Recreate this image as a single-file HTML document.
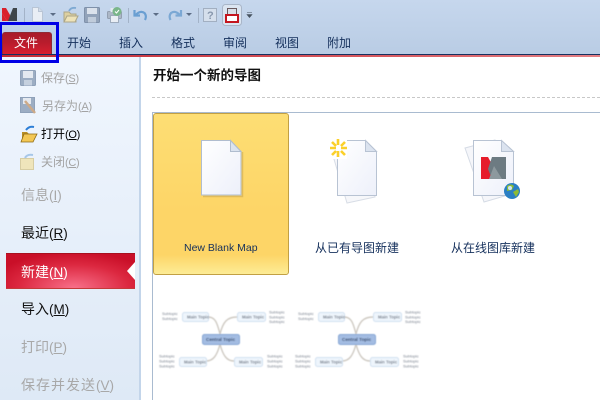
<!DOCTYPE html>
<html lang="zh"><head><meta charset="utf-8"><style>
*{box-sizing:border-box}
html,body{margin:0;padding:0;width:600px;height:400px;overflow:hidden;background:#fff}
body{position:relative;font-family:"Liberation Sans","WenQuanYi Zen Hei","Noto Sans CJK SC",sans-serif}
.a{position:absolute;white-space:nowrap}
.tab{position:absolute;top:31px;font-size:12px;line-height:24px;height:24px;color:#15305c}
.s{position:absolute;white-space:nowrap;font-size:12px;line-height:18px;color:#a3a3a3}
.b{position:absolute;left:21px;white-space:nowrap;font-size:14px;line-height:20px;color:#a8a8a8}
.s i{font-style:normal;font-size:11px;letter-spacing:-.3px}
.b i{font-style:normal;font-size:13.500px;letter-spacing:0}
u{text-underline-offset:1px}
.lbl{position:absolute;font-size:12px;line-height:16px;color:#15305c;white-space:nowrap}
</style></head><body>
<div class="a" style="left:0;top:0;width:600px;height:54px;background:linear-gradient(#c6d7ed,#b9cce4)"></div>
<div class="a" style="left:0;top:54px;width:600px;height:1px;background:#16305f"></div>
<div class="a" style="left:0;top:55px;width:600px;height:2px;background:linear-gradient(90deg,#c22a35,#d8565c 60%,#e47f84)"></div>

<svg class="a" style="left:0;top:0" width="260" height="30" viewBox="0 0 260 30">
<path d="M2 8h4l4 7v6H7l-5-8z" fill="#d9202c"/><path d="M2 13l5 8H2z" fill="#d9202c"/><path d="M8 21l3-8 2-5h4v13z" fill="#3f464b"/>
<path d="M24.500 8v15" stroke="#a3b3c8"/>
<path d="M32.500 7.500h6l4 4v10h-10z" fill="#e9eef5" stroke="#b9c5d5"/><path d="M38.500 7.500v4h4" fill="#d3dce8" stroke="#b9c5d5"/>
<path d="M50 13h6l-3 3z" fill="#5c6d85"/>
<path d="M64 12h5l2 2h5v8H64z" fill="#ddd0a0" stroke="#aca688"/><path d="M64 22l3-6h11l-3 6z" fill="#eee3b8" stroke="#aca688"/><path d="M69 11q2-4 7-3" fill="none" stroke="#7ea9d2" stroke-width="1.800"/>
<rect x="84.500" y="7.500" width="15" height="15" rx="1" fill="#92a3ba" stroke="#7f91aa"/><rect x="87" y="8" width="10" height="6" fill="#dbe2ec"/><rect x="88" y="17" width="8" height="5.500" fill="#c0ccdb"/>
<rect x="107.500" y="11.500" width="14" height="7" rx="1" fill="#acb7c6" stroke="#939fb0"/><rect x="110.500" y="15.500" width="8" height="7" fill="#e9eef4" stroke="#9dabbd"/><rect x="110.500" y="8" width="7" height="4" fill="#e4e9f0"/><circle cx="117" cy="11.500" r="4.500" fill="#7ab68a"/><path d="M115 11.500l1.500 1.500 2.500-3" stroke="#fff" fill="none"/>
<path d="M128.500 8v15" stroke="#a3b3c8"/>
<path d="M134.500 10v5.500h5.500M135.500 15q5-5 9-2 2.500 3 .5 7" fill="none" stroke="#6a9fd2" stroke-width="2.200"/>
<path d="M153 13h6l-3 3z" fill="#5c6d85"/>
<path d="M181 10v5.500h-5.500M180 15q-5-5-9-2-2.500 3-.5 7" fill="none" stroke="#7ba8d4" stroke-width="2.200"/>
<path d="M186 13h6l-3 3z" fill="#5c6d85"/>
<path d="M198.500 8v15" stroke="#a3b3c8"/>
<rect x="203.500" y="8.500" width="13" height="13" fill="#d5dfec" stroke="#a2afc1"/><text x="207" y="19" font-size="11" font-weight="bold" fill="#8797ad" font-family="Liberation Sans">?</text>
<rect x="222.500" y="4.500" width="19" height="21" rx="3" fill="#dbe5f1" stroke="#a9b6c8"/><rect x="227.500" y="8.500" width="9" height="6" fill="#d9dfe8" stroke="#6a5a5e"/><rect x="226" y="15" width="12" height="7" fill="#fff" stroke="#c4161f" stroke-width="2"/>
<path d="M247 12.500h5M247 14.500h5l-2.500 3z" fill="#46525f" stroke="#46525f" stroke-width=".600"/>
</svg>

<div class="a" style="left:2px;top:32px;width:50px;height:22px;border-radius:3px 3px 0 0;background:linear-gradient(#a91b2a,#b81c2c 45%,#d71f30);border:1px solid #8f2a35;border-bottom:0"></div>
<div class="a" style="left:14px;top:34px;color:#fff;font-size:12px;line-height:18px">文件</div>
<div class="tab" style="left:67px">开始</div>
<div class="tab" style="left:119px">插入</div>
<div class="tab" style="left:171px">格式</div>
<div class="tab" style="left:223px">审阅</div>
<div class="tab" style="left:275px">视图</div>
<div class="tab" style="left:327px">附加</div>

<div class="a" style="left:0;top:57px;width:141px;height:343px;background:linear-gradient(#f0f6fe,#dee9f6);border-right:2px solid #c3d5ea"></div>
<div class="a" style="left:0;top:22px;width:59px;height:41px;border:3px solid #0000e6;border-left-width:2px"></div>

<svg class="a" style="left:18px;top:68px" width="20" height="104" viewBox="0 0 20 104">
<rect x="2.500" y="2.500" width="15" height="15" rx="1" fill="#9cadc3" stroke="#8fa1b9"/><rect x="5" y="3" width="10" height="7" fill="#e4e9f0"/><rect x="6" y="12" width="8" height="5.500" fill="#c5d0de"/>
<rect x="2.500" y="29.500" width="14" height="15" fill="#9cadc3" stroke="#8fa1b9"/><rect x="5" y="30" width="8" height="6" fill="#e4e9f0"/><path d="M7 33l10 12" stroke="#cdaa88" stroke-width="2.500"/>
<path d="M4 72v-8h5l2 2h5v6z" fill="#b98f27"/><path d="M3 74l3-8h13l-4 8z" fill="#f3c754" stroke="#8d6a14" stroke-width=".800"/><path d="M8 62q3-4 8-3" fill="none" stroke="#2d7fd6" stroke-width="2"/>
<path d="M2.500 101.500v-11h13v11z" fill="#efe5bb" stroke="#d7cda3"/><path d="M7 90q2-4 8-3" fill="none" stroke="#a7c7e8" stroke-width="2"/>
</svg>
<div class="s" style="left:41px;top:69px">保存<i>(<u>S</u>)</i></div>
<div class="s" style="left:42px;top:97px">另存为<i>(<u>A</u>)</i></div>
<div class="s" style="left:41px;top:125px;color:#000">打开<i>(<u>O</u>)</i></div>
<div class="s" style="left:41px;top:153px">关闭<i>(<u>C</u>)</i></div>
<div class="b" style="top:185px">信息<i>(<u>I</u>)</i></div>
<div class="b" style="top:223px;color:#111">最近<i>(<u>R</u>)</i></div>

<div class="a" style="left:6px;top:253px;width:129px;height:36px;background:radial-gradient(ellipse 85px 36px at 68px 34px,#f8708a,#dc2840 65%,#c90f28);border-top:1px solid #a8101f;border-bottom:1px solid #c43a3a"></div>
<svg class="a" style="left:127px;top:262px" width="8" height="18"><path d="M8 0v18L0 9z" fill="#fff"/></svg>
<div class="b" style="top:262px;color:#fff">新建<i>(<u>N</u>)</i></div>
<div class="b" style="top:299px;color:#111">导入<i>(<u>M</u>)</i></div>
<div class="b" style="top:337px">打印<i>(<u>P</u>)</i></div>
<div class="b" style="top:375px;letter-spacing:1px">保存并发送<i>(<u>V</u>)</i></div>

<div class="a" style="left:153px;top:67px;font-size:13.500px;line-height:18px;font-weight:bold;color:#111">开始一个新的导图</div>
<div class="a" style="left:152px;top:97px;width:448px;border-top:1px dashed #c8c8c8"></div>
<div class="a" style="left:152px;top:112px;width:448px;height:1px;background:#a9bbd0"></div>
<div class="a" style="left:152px;top:112px;width:1px;height:288px;background:#a9bbd0"></div>

<div class="a" style="left:153px;top:113px;width:136px;height:162px;border-radius:3px;border:1px solid #c2a044;background:linear-gradient(#fdde74,#fdd567 60%,#fdd567 88%,#fdec96)"></div>
<svg width="0" height="0" style="position:absolute"><defs><linearGradient id="g" x1="0" y1="0" x2="1" y2="1"><stop offset="0" stop-color="#fff"/><stop offset="1" stop-color="#edf0fa"/></linearGradient></defs></svg>
<svg class="a" style="left:200px;top:138px" width="48" height="62">
<path d="M3 58.500h39.500V14" fill="none" stroke="#c49f4c" stroke-opacity=".500" stroke-width="1.500"/>
<path d="M1.500 2.500h29l10.500 11v43.500H1.500z" fill="url(#g)" stroke="#b0bdcf"/><path d="M30.500 2.500v11H41z" fill="#dbe3ef" stroke="#b0bdcf"/>
</svg>
<div class="a" style="left:184px;top:240px;font-size:10.500px;line-height:16px;color:#15305c">New Blank Map</div>

<svg class="a" style="left:325px;top:133px" width="65" height="72">
<path d="M6 16l36 0 8 48-28 6z" fill="#f6f7fa" stroke="#d8dde6"/><path d="M20 20h30v42H24z" fill="#f1f3f8" stroke="#dce0e8"/>
<path d="M12.500 7.500h28l11 11v44h-39z" fill="url(#g)" stroke="#b8c3d3"/><path d="M40.500 7.500v11h11z" fill="#dbe3ef" stroke="#b8c3d3"/>
<rect x="3" y="4" width="19" height="22" fill="#fff"/>
<g stroke="#fbd02a" stroke-width="2.600"><path d="M13 6v6M13 18v6M5 15h6M16 15h6M7 9l4 4M20 9l-4 4M7 22l4-4M20 22l-4-4"/></g>
</svg>
<div class="lbl" style="left:315px;top:240px">从已有导图新建</div>

<svg class="a" style="left:460px;top:135px" width="65" height="70">
<path d="M5 13l30-8 20 53-31 9z" fill="#f5f6fa" stroke="#d5dbe5"/>
<path d="M13.500 5.500h28l12 11v44h-40z" fill="url(#g)" stroke="#b8c3d3"/><path d="M41.500 5.500v11h12z" fill="#dbe3ef" stroke="#b8c3d3"/>
<path d="M21 22h7l8 15-4 7H21z" fill="#e61c2b"/><path d="M32 22h14v22H32l-4-10z" fill="#6d7b82"/><path d="M29 44l5-13 8 13z" fill="#8d999e"/>
<circle cx="52" cy="56" r="8" fill="#2a7fc4"/><path d="M47 51q4-3 7 0l-2 4-5 1zM53 57l5-3 1 3-3 5z" fill="#8dbb35"/><circle cx="50" cy="53" r="2" fill="#cfe6f6"/>
</svg>
<div class="lbl" style="left:451px;top:240px">从在线图库新建</div>

<svg class="a" style="left:153px;top:300px" width="290" height="80" viewBox="0 0 290 80" font-family="Liberation Sans" font-size="4" fill="#7a828f">
<defs><filter id="f" x="-5%" y="-5%" width="110%" height="110%"><feGaussianBlur stdDeviation=".550"/></filter></defs>
<g filter="url(#f)">
<g id="m">
<path d="M67 34C64 22 62 17 55 17M67 34C70 22 74 17 84 17M67 44C64 56 60 61 53 61M67 44C70 56 74 61 81 61" fill="none" stroke="#cfcac3" stroke-width="1.400"/>
<rect x="49.500" y="34.500" width="37" height="10" rx="2" fill="#a3bce2" stroke="#88a8d5"/>
<text x="53" y="41" font-weight="bold" font-size="4.600" fill="#34486a">Central Topic</text>
<rect x="29.500" y="12.500" width="26" height="9" rx="2" fill="#eef5fc" stroke="#d2e1f0"/><text x="34" y="18.500" font-size="4.300" font-weight="bold">Main Topic</text>
<rect x="84.500" y="12.500" width="28" height="9" rx="2" fill="#eef5fc" stroke="#d2e1f0"/><text x="89" y="18.500" font-size="4.300" font-weight="bold">Main Topic</text>
<rect x="26.500" y="57.500" width="27" height="9" rx="2" fill="#eef5fc" stroke="#d2e1f0"/><text x="31" y="63.500" font-size="4.300" font-weight="bold">Main Topic</text>
<rect x="81.500" y="57.500" width="28" height="9" rx="2" fill="#eef5fc" stroke="#d2e1f0"/><text x="86" y="63.500" font-size="4.300" font-weight="bold">Main Topic</text>
<text x="9" y="15">Subtopic</text><text x="9" y="20">Subtopic</text>
<text x="116" y="13.500">Subtopic</text><text x="116" y="18.500">Subtopic</text><text x="116" y="23">Subtopic</text>
<text x="6" y="57.500">Subtopic</text><text x="6" y="62.500">Subtopic</text><text x="6" y="67.500">Subtopic</text>
<text x="114" y="57.500">Subtopic</text><text x="114" y="62.500">Subtopic</text><text x="114" y="67.500">Subtopic</text>
</g>
<use href="#m" x="136"/>
</g>
</svg>
</body></html>
